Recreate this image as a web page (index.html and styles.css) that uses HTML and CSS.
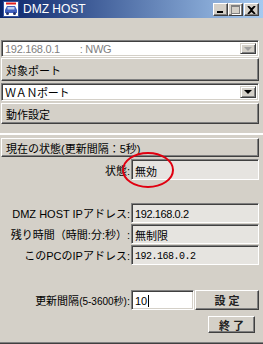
FILE: index.html
```html
<!DOCTYPE html>
<html lang="ja">
<head>
    <meta charset="UTF-8">
    <title>DMZ HOST</title>
    <link rel="stylesheet" href="styles.css">
</head>
<body>
    <div class="window">
        <div class="titlebar">
            <svg class="app-icon" width="16" height="16" viewBox="0 0 16 16">
                <rect x="0.5" y="0.5" width="15" height="15" fill="#fff" stroke="#3050a0"/>
                <rect x="3" y="1.5" width="10" height="2" fill="#e02020"/>
                <path d="M2 9 L4 5 L12 5 L14 9 L14 12 L2 12 Z" fill="#4060c0"/>
                <rect x="4.5" y="6" width="7" height="2.5" fill="#c0d0f0"/>
                <circle cx="4.5" cy="12.5" r="1.5" fill="#203070"/>
                <circle cx="11.5" cy="12.5" r="1.5" fill="#203070"/>
            </svg>
            <span class="title">DMZ HOST</span>
            <div class="caption-buttons">
                <span class="cap-btn"><span class="glyph-min"></span></span>
                <span class="cap-btn"><span class="glyph-max"></span></span>
                <span class="cap-btn close">
                    <svg width="9" height="8" viewBox="0 0 9 8"><path d="M1 0 L4.5 3 L8 0 M1 8 L4.5 5 L8 8 M1 0 L8 8 M8 0 L1 8" stroke="#000" stroke-width="1.6" fill="none"/></svg>
                </span>
            </div>
        </div>

        <div class="upper">
            <div class="combo disabled">
                <span class="combo-text">192.168.0.1<span class="gap"></span>: NWG</span>
                <span class="combo-button"><span class="arrow"></span></span>
            </div>
            <div class="label-panel first">対象ポート</div>
            <div class="combo second">
                <span class="combo-text">ＷＡＮポート</span>
                <span class="combo-button"><span class="arrow"></span></span>
            </div>
            <div class="label-panel last">動作設定</div>
        </div>

        <div class="lower">
            <div class="label-panel status-head">現在の状態(更新間隔：5秒)</div>

            <div class="row status-row">
                <span class="row-label">状態:</span>
                <span class="field">無効</span>
            </div>

            <div class="info-rows">
                <div class="row">
                    <span class="row-label">DMZ HOST IPアドレス:</span>
                    <span class="field ip">192.168.0.2</span>
                </div>
                <div class="row">
                    <span class="row-label">残り時間（時間:分:秒）:</span>
                    <span class="field">無制限</span>
                </div>
                <div class="row">
                    <span class="row-label">このPCのIPアドレス:</span>
                    <span class="field mono">192.168.0.2</span>
                </div>
            </div>

            <div class="row input-row">
                <span class="row-label">更新間隔<small>(5-3600秒)</small>:</span>
                <span class="text-input">10<span class="caret"></span></span>
                <span class="button set">設 定</span>
            </div>

            <div class="close-row">
                <span class="button quit">終 了</span>
            </div>
        </div>

        <svg class="mark" width="56" height="40" viewBox="0 0 56 40">
            <ellipse cx="28" cy="20" rx="25" ry="17" fill="none" stroke="#e00010" stroke-width="2"/>
        </svg>
    </div>
</body>
</html>
```

FILE: styles.css
```css
body {
    margin: 0;
    background-color: #d4d0c8;
    font-family: "Liberation Sans", "Noto Sans CJK JP", sans-serif;
    font-size: 11px;
    color: #000;
}
.window {
    position: relative;
    width: 263px;
    height: 344px;
    overflow: hidden;
    background-color: #d4d0c8;
}
.titlebar {
    height: 18px;
    display: flex;
    align-items: flex-start;
    background: linear-gradient(to right, #0a246a, #a6caf0);
}
.app-icon {
    margin: 1px 0 0 3px;
}
.title {
    color: #fff;
    font-size: 12px;
    margin: 2px 0 0 4px;
    line-height: 14px;
}
.caption-buttons {
    display: flex;
    margin: 3px 4px 0 auto;
}
.cap-btn {
    width: 15px;
    height: 13px;
    box-sizing: border-box;
    background-color: #d4d0c8;
    border: 1px solid;
    border-color: #fff #404040 #404040 #fff;
    box-shadow: inset -1px -1px #808080;
    position: relative;
}
.cap-btn.close {
    margin-left: 1px;
    display: flex;
    align-items: center;
    justify-content: center;
}
.glyph-min {
    position: absolute;
    left: 3px;
    top: 7px;
    width: 6px;
    height: 2px;
    background-color: #000;
}
.glyph-max {
    position: absolute;
    left: 2px;
    top: 1px;
    width: 7px;
    height: 6px;
    border: 1px solid #808080;
    border-top-width: 2px;
    box-shadow: 1px 1px #fff;
}

/* upper part */
.upper {
    padding: 22px 4px 0 1px;
}
.combo {
    height: 17px;
    box-sizing: border-box;
    display: flex;
    align-items: center;
    background-color: #fff;
    border: 1px solid;
    border-color: #808080 #fff #fff #808080;
    box-shadow: inset 1px 1px #404040, inset -1px -1px #d4d0c8;
    padding: 2px 2px 2px 3px;
}
.combo.second {
    height: 18px;
    margin-top: 2px;
}
.combo-text {
    flex: 1;
    letter-spacing: -0.3px;
    white-space: nowrap;
}
.combo.disabled .combo-text {
    color: #808080;
}
.gap {
    display: inline-block;
    width: 20px;
}
.combo-button {
    width: 16px;
    height: 100%;
    box-sizing: border-box;
    background-color: #d4d0c8;
    border: 1px solid;
    border-color: #d4d0c8 #404040 #404040 #d4d0c8;
    box-shadow: inset 1px 1px #fff, inset -1px -1px #808080;
    display: flex;
    align-items: center;
    justify-content: center;
}
.arrow {
    width: 0;
    height: 0;
    border-left: 4px solid transparent;
    border-right: 4px solid transparent;
    border-top: 4px solid #000;
}
.combo.disabled .arrow {
    border-top-color: #a0a0a0;
}
.label-panel {
    box-sizing: border-box;
    background-color: #d4d0c8;
    border: 1px solid;
    border-color: #fff #404040 #404040 #fff;
    box-shadow: inset -1px -1px #808080;
    padding-left: 4px;
    display: flex;
    align-items: center;
    white-space: nowrap;
}
.label-panel.first {
    height: 23px;
    margin-top: 1px;
}
.label-panel.last {
    height: 21px;
    margin-top: 2px;
}

/* lower part */
.lower {
    margin-top: 9px;
    border-top: 2px solid #fff;
    padding: 3px 4px 0 1px;
    height: 204px;
    border-bottom: 1px solid #808080;
    box-shadow: 0 1px #404040;
}
.status-head {
    height: 19px;
}
.row {
    display: flex;
    align-items: center;
}
.row-label {
    width: 130px;
    flex: none;
    text-align: right;
    padding-right: 1px;
    box-sizing: border-box;
    white-space: nowrap;
}
.row-label small {
    font-size: 10px;
}
.field {
    flex: 1;
    height: 20px;
    box-sizing: border-box;
    background-color: #e6e4e0;
    border: 1px solid;
    border-color: #808080 #fff #fff #808080;
    box-shadow: inset 1px 1px #404040;
    padding: 2px 3px 0;
    display: flex;
    align-items: center;
}
.field.ip {
    letter-spacing: -0.4px;
}
.field.mono {
    font-family: "Liberation Mono", monospace;
    font-size: 10px;
    letter-spacing: -0.5px;
}
.status-row {
    margin-top: 2px;
}
.status-row .field {
    height: 21px;
}
.info-rows {
    margin-top: 23px;
    display: flex;
    flex-direction: column;
    gap: 1px;
}
.input-row {
    margin-top: 25px;
}
.text-input {
    width: 63px;
    height: 20px;
    box-sizing: border-box;
    background-color: #fff;
    border: 1px solid;
    border-color: #808080 #fff #fff #808080;
    box-shadow: inset 1px 1px #404040, inset -1px -1px #d4d0c8;
    padding: 2px 3px 0;
    display: flex;
    align-items: center;
}
.caret {
    width: 1px;
    height: 12px;
    background-color: #000;
    margin-left: 1px;
}
.button {
    box-sizing: border-box;
    background-color: #d4d0c8;
    border: 1px solid;
    border-color: #fff #404040 #404040 #fff;
    box-shadow: inset -1px -1px #808080;
    display: flex;
    align-items: center;
    justify-content: center;
    font-weight: bold;
    color: #202020;
}
.button.set {
    margin-left: 1px;
    width: 64px;
    height: 20px;
}
.close-row {
    display: flex;
    justify-content: flex-end;
    margin-top: 6px;
    padding-right: 4px;
}
.button.quit {
    width: 47px;
    height: 17px;
}
.mark {
    position: absolute;
    left: 120px;
    top: 150px;
}
```
